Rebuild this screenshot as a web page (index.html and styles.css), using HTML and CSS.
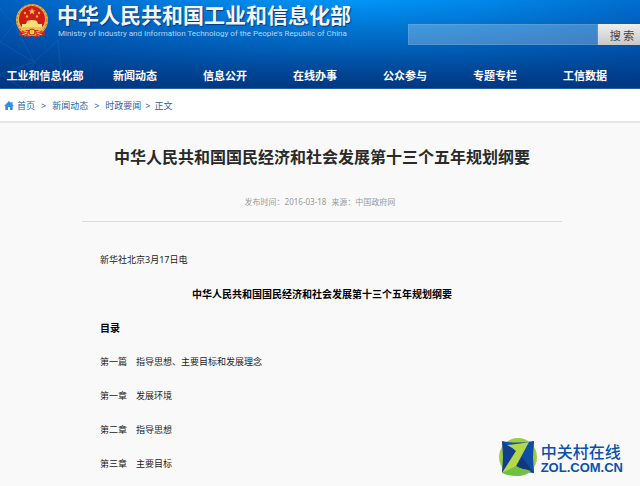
FILE: index.html
```html
<!DOCTYPE html>
<html lang="zh-CN">
<head>
<meta charset="utf-8">
<meta name="viewport" content="width=device-width, initial-scale=1">
<title>中华人民共和国工业和信息化部</title>
<link rel="stylesheet" href="styles.css">
</head>
<body>
<header class="header">
  <svg class="network" viewBox="0 0 120 89" aria-hidden="true">
    <g fill="none" stroke="#4aa0e8" stroke-width="1">
      <path d="M0 8 14 24 0 42M14 24 34 62 0 74M0 42 34 62 58 40 62 84M34 62 24 89M0 74 24 89M62 84 34 62"/>
    </g>
  </svg>
  <div class="brand-row">
    <svg class="emblem" viewBox="0 0 34 36" aria-hidden="true">
      <path d="M5 25 4 33l6-2 3 4 4-3 4 3 3-4 6 2-1-8z" fill="#d3201c"/>
      <circle cx="17" cy="17" r="16" fill="#e3b54a"/>
      <circle cx="17" cy="17" r="15" fill="none" stroke="#c9641c" stroke-width="1" stroke-dasharray="2 2"/>
      <circle cx="17" cy="16" r="13" fill="#d41c17"/>
      <path d="m17 5 1 2.500h2.500l-2 1.500 1 2.500-2.500-1.500-2.500 1.500 1-2.500-2-1.500H16z" fill="#f5c552"/>
      <g fill="#f0b54a"><circle cx="10" cy="10" r="1.200"/><circle cx="12" cy="13.500" r="1.200"/><circle cx="22" cy="13.500" r="1.200"/><circle cx="24" cy="10" r="1.200"/></g>
      <path d="M12 18q5-2 10 0l1 3H11zM7 21h20v4H7z" fill="#f8e078"/>
      <path d="M5 24h24l-3 3H8z" fill="#f0c050"/>
      <circle cx="17" cy="29" r="3" fill="#f3c74a" stroke="#b33416"/>
      <path d="M7 28q4 4 7 1M27 28q-4 4-7 1M9 33l4-2M25 33l-4-2" fill="none" stroke="#ef3a28" stroke-width="2"/>
      <path d="m7 32 5-2M27 32l-5-2" stroke="#f5cf50"/>
    </svg>
    <div class="brand">
      <div class="brand-name">中华人民共和国工业和信息化部</div>
      <div class="brand-en">Ministry of Industry and Information Technology of the People's Republic of China</div>
    </div>
    <form class="search">
      <input class="search-box" type="text" aria-label="搜索内容">
      <button class="search-button" type="button">搜 索</button>
    </form>
  </div>
  <nav class="nav">
    <a href="#">工业和信息化部</a>
    <a href="#">新闻动态</a>
    <a href="#">信息公开</a>
    <a href="#">在线办事</a>
    <a href="#">公众参与</a>
    <a href="#">专题专栏</a>
    <a href="#">工信数据</a>
  </nav>
</header>
<nav class="crumbs" aria-label="当前位置">
  <a class="home" href="#"><svg class="home-icon" viewBox="0 0 10 9" aria-hidden="true"><path d="M5 0 0 5h1.300v4h2.700V6h2v3h2.700V5H10L8.500 3.500V1H7.300v1.300z" fill="#2f8fe4"/></svg>首页</a>
  <span>&gt;</span><a href="#">新闻动态</a>
  <span>&gt;</span><a href="#">时政要闻</a>
  <span class="last">&gt;</span><a href="#">正文</a>
</nav>
<main class="article">
  <h1>中华人民共和国国民经济和社会发展第十三个五年规划纲要</h1>
  <p class="meta"><span>发布时间：2016-03-18</span><span>来源：中国政府网</span></p>
  <div class="content">
    <p>新华社北京3月17日电</p>
    <h2>中华人民共和国国民经济和社会发展第十三个五年规划纲要</h2>
    <h3>目录</h3>
    <p>第一篇　指导思想、主要目标和发展理念</p>
    <p>第一章　发展环境</p>
    <p>第二章　指导思想</p>
    <p>第三章　主要目标</p>
  </div>
</main>
<div class="watermark">
  <svg class="zol-icon" viewBox="0 0 38 38" aria-hidden="true">
    <circle cx="19" cy="19" r="19" fill="#a0cb40"/>
    <path d="M3 3q16 3 32 0-2 16 0 32-16-3-32 0 2-16 0-32" fill="#1355ac"/>
    <path d="M3 3 17 13 3 35q2-16 0-32" fill="#123f8c"/>
    <path d="M35 35 23 19 30 4q3 0 5-1-2 16 0 32" fill="#0f4da6"/>
    <path d="m35 35-12-16-5 9 8 4z" fill="#143778"/>
    <path d="M8 7q12-1 22-3L17 28q4 3 12 4-12 1-26 3l14-22q-4-4-9-6" fill="#b5d84a"/>
    <path d="m3 35 14-7q4 3 12 4l3 1q-6 5-14 5-8 0-15-3" fill="#6fc044"/>
  </svg>
  <div class="zol-text">
    <div class="zol-cn">中关村在线</div>
    <div class="zol-en">ZOL.COM.CN</div>
  </div>
</div>
</body>
</html>
```

FILE: styles.css
```css
* {
  box-sizing: border-box;
}

body {
  margin: 0;
  min-height: 100vh;
  position: relative;
  background: #f9f9f9;
  font-family: "Noto Sans", "Noto Sans CJK SC", sans-serif;
  font-size: 9px;
  color: #222;
}

a {
  color: inherit;
  text-decoration: none;
}

h1, h2, h3, p {
  margin: 0;
}

.header {
  position: relative;
  overflow: hidden;
  border-bottom: 1px solid #2460a5;
  background:
    linear-gradient(to bottom, rgba(0, 52, 124, 0) 0%, rgba(0, 56, 135, 0.5) 55%, rgba(0, 52, 124, 0.95) 100%),
    radial-gradient(ellipse 420px 190px at 56% 0, #0096f8 0%, #0088ea 30%, #0056b6 100%);
}

.network {
  position: absolute;
  left: 0;
  top: 0;
  width: 120px;
  opacity: 0.15;
}

.brand-row {
  position: relative;
  display: flex;
  align-items: flex-start;
  height: 63px;
  padding-left: 15px;
}

.emblem {
  width: 34px;
  height: 36px;
  margin-top: 3px;
}

.brand {
  margin-left: 8px;
  white-space: nowrap;
}

.brand-name {
  font-family: "Noto Sans CJK SC", sans-serif;
  font-size: 21px;
  line-height: 28px;
  font-weight: 700;
  color: #f4f4f4;
  text-shadow: 1px 1px 1px #003a80;
}

.brand-en {
  padding-left: 1px;
  font-family: Roboto, sans-serif;
  font-size: 8px;
  line-height: 12px;
  color: #b5d6f5;
}

.search {
  display: flex;
  width: 232px;
  height: 21px;
  margin: 24px 0 0 auto;
}

.search-box {
  flex: 1;
  min-width: 0;
  padding: 0 6px;
  border: 1px solid rgba(255, 255, 255, 0.1);
  border-radius: 0;
  background: rgba(255, 255, 255, 0.25);
  color: #fff;
}

.search-button {
  width: 42px;
  padding: 0 0 0 6px;
  border: 0;
  background: linear-gradient(#eee, #c8c8c8);
  font-family: "Noto Sans CJK SC", sans-serif;
  font-size: 11px;
  color: #444;
}

.nav {
  position: relative;
  display: grid;
  grid-template-columns: repeat(7, 1fr);
  padding-right: 10px;
  font-family: "Noto Sans CJK SC", sans-serif;
  font-size: 11px;
  line-height: 25px;
  font-weight: 700;
  text-align: center;
  white-space: nowrap;
  color: #fff;
}

.crumbs {
  display: flex;
  align-items: center;
  height: 34px;
  padding-left: 4px;
  border-bottom: 2px solid #e6e6e6;
  background: #fff;
  color: #2a64a5;
  white-space: nowrap;
}

.crumbs span {
  margin: 0 6px;
}

.crumbs .last {
  margin: 0 4px;
}

.home {
  display: flex;
  align-items: center;
  gap: 3px;
}

.home-icon {
  width: 10px;
  height: 9px;
}

.article {
  padding: 19px 78px 0 82px;
}

h1 {
  font-family: "Noto Sans CJK SC", sans-serif;
  font-size: 16px;
  line-height: 28px;
  text-align: center;
  white-space: nowrap;
  color: #2a2a2a;
}

.meta {
  display: flex;
  justify-content: center;
  gap: 5px;
  padding: 21px 4px 8px 0;
  border-bottom: 1px solid #dcdcdc;
  font-size: 8px;
  line-height: 22px;
  color: #999;
}

.content {
  padding: 21px 18px 0;
  line-height: 34px;
}

h2, h3 {
  font-size: 10px;
  line-height: 34px;
  color: #000;
}

h2 {
  text-align: center;
  white-space: nowrap;
}

.watermark {
  position: absolute;
  right: 17px;
  bottom: 10px;
  display: flex;
  align-items: center;
  gap: 4px;
  color: #0b50ae;
}

.zol-icon {
  width: 38px;
  height: 38px;
}

.zol-cn {
  font-family: "Noto Sans CJK SC", sans-serif;
  font-size: 16px;
  line-height: 20px;
  font-weight: 500;
}

.zol-en {
  font-family: "Liberation Sans", sans-serif;
  font-size: 13px;
  line-height: 13px;
  font-weight: 700;
}
```
